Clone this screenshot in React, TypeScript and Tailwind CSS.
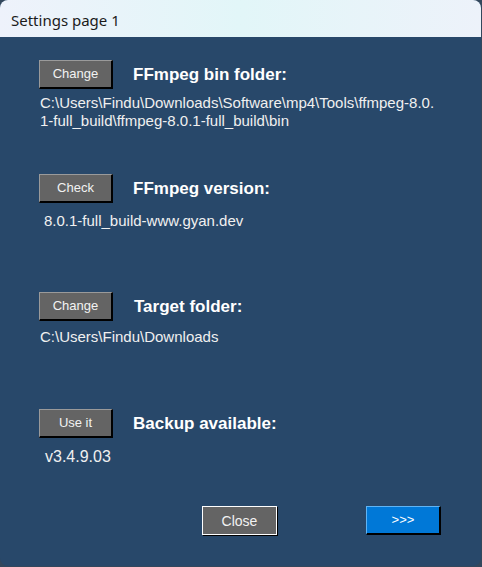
import React from "react";

const btn =
  "flex h-[29px] w-[74px] items-center justify-center border-l border-t border-[#9a9a9a] border-b-2 border-r-2 border-b-black border-r-black bg-[#646464] text-[13px] text-[#f2f2f2]";

function Section({
  button,
  label,
  labelGap,
  children,
}: {
  button: string;
  label: string;
  labelGap: string;
  children: React.ReactNode;
}) {
  return (
    <div>
      <div className="flex items-center">
        <div className={btn}>{button}</div>
        <div className={`${labelGap} text-[17px] font-bold text-white`}>{label}</div>
      </div>
      {children}
    </div>
  );
}

export default function App(): JSX.Element {
  return (
    <div
      className="h-[567px] w-[482px] bg-[#33475c]"
      style={{ fontFamily: '"Liberation Sans", Arial, sans-serif' }}
    >
      <div className="flex h-[566px] w-[481px] flex-col overflow-hidden rounded-lg bg-[#28486a]">
        <div className="flex h-[37px] items-center bg-gradient-to-r from-[#eef2fb] via-[#e2f6f8] to-[#edf2fa] pl-[11px] pt-[3px] text-[15px] text-[#1b1b1b]" style={{ fontFamily: '"Noto Sans", "Open Sans", sans-serif' }}>
          Settings page 1
        </div>
        <div className="flex flex-col pl-[39px] pt-[23px] text-[15px] leading-[18px] text-[#f0f0f0]">
          <Section button="Change" label="FFmpeg bin folder:" labelGap="ml-[20px]">
            <div className="mt-[5px] pl-px">
              <div>C:\Users\Findu\Downloads\Software\mp4\Tools\ffmpeg-8.0.</div>
              <div>1-full_build\ffmpeg-8.0.1-full_build\bin</div>
            </div>
          </Section>
          <div className="mt-[44px]">
            <Section button="Check" label="FFmpeg version:" labelGap="ml-[20px]">
              <div className="mt-[9px] pl-[5px]">8.0.1-full_build-www.gyan.dev</div>
            </Section>
          </div>
          <div className="mt-[62px]">
            <Section button="Change" label="Target folder:" labelGap="ml-[21px]">
              <div className="mt-[7px] pl-px">C:\Users\Findu\Downloads</div>
            </Section>
          </div>
          <div className="mt-[63px]">
            <Section button="Use it" label="Backup available:" labelGap="ml-[20px]">
              <div className="mt-[9px] pl-[6px] text-[16px] leading-[19px]">v3.4.9.03</div>
            </Section>
          </div>
          <div className="mt-[40px] flex">
            <div className="ml-[163px] flex h-[29px] w-[75px] items-center justify-center border border-white bg-[#646464] text-[14px] text-[#f2f2f2] shadow-[1px_1px_0_#000]">
              Close
            </div>
            <div className="ml-[89px] flex h-[29px] w-[75px] items-center justify-center border-l border-t border-[#5fb4f5] border-b-2 border-r-2 border-b-black border-r-black bg-[#0078d7] text-[13px] text-white">
              &gt;&gt;&gt;
            </div>
          </div>
        </div>
      </div>
    </div>
  );
}
